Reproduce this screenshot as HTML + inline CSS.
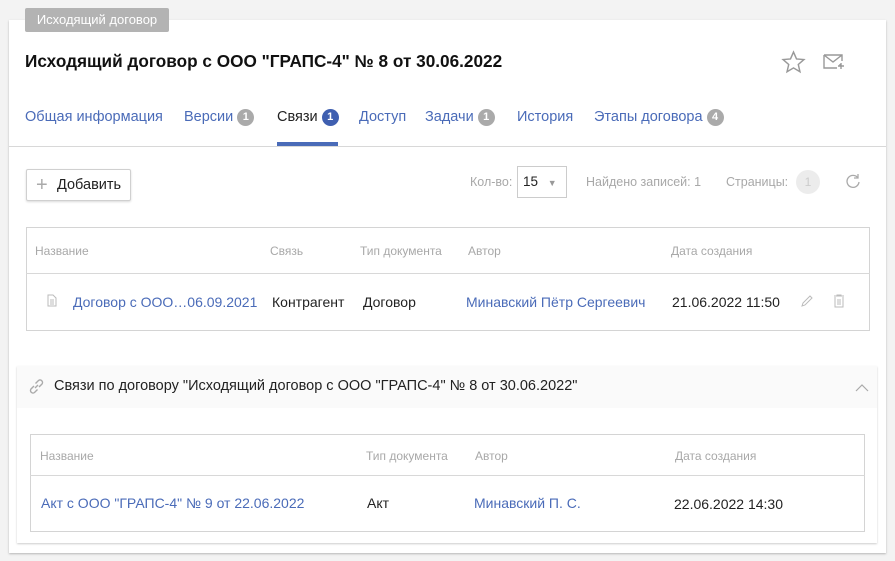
<!DOCTYPE html>
<html><head><meta charset="utf-8"><style>
*{box-sizing:border-box;margin:0;padding:0}
body{width:895px;height:561px;background:#f3f3f3;font-family:"Liberation Sans",sans-serif;position:relative;overflow:hidden;color:#222}
.a{position:absolute;white-space:nowrap}
.card{position:absolute;left:9px;top:20px;width:877px;height:533px;background:#fff;box-shadow:0 1px 2px rgba(0,0,0,.25)}
.tag{left:25px;top:8px;width:144px;height:24px;background:#b3b3b3;color:#fff;font-size:13px;line-height:24px;text-align:center;border-radius:2px}
.blue{color:#4a6bb8}
.badge{display:inline-block;width:17px;height:17px;border-radius:50%;background:#aaa;color:#fff;font-size:11px;line-height:17px;text-align:center;vertical-align:1px;margin-left:4px;font-weight:bold}
.g{color:#a8a8a8;font-size:12px}
.box{position:absolute;border:1px solid #d4d4d4;background:#fff}
</style></head><body>
<div class="card"></div>
<div class="a tag">Исходящий договор</div>
<div class="a" style="left:25px;top:51px;font-size:17.2px;font-weight:bold;color:#111">Исходящий договор с ООО "ГРАПС-4" № 8 от 30.06.2022</div>
<svg class="a" style="left:781px;top:50px" width="25" height="25" viewBox="0 0 24 24"><path d="M12 2l2.9 6.6 7.1.6-5.4 4.7 1.6 7-6.2-3.7-6.2 3.7 1.6-7L2 9.2l7.1-.6z" fill="none" stroke="#999" stroke-width="1.4"/></svg>
<svg class="a" style="left:822px;top:52px" width="24" height="20" viewBox="0 0 24 20"><path d="M18 14v-2M2 3h18v6M2 3v13h13M2 3l9 7 9-7M16 14h6M19 11v6" fill="none" stroke="#999" stroke-width="1.4"/></svg>
<div class="a" style="left:25px;top:108px;font-size:14.5px;line-height:18px"><span class="blue">Общая информация</span></div>
<div class="a" style="left:184px;top:108px;font-size:14.5px;line-height:18px"><span class="blue">Версии</span><span class="badge">1</span></div>
<div class="a" style="left:277px;top:108px;font-size:14.5px;line-height:18px">Связи<span class="badge" style="background:#3f5fb0">1</span></div>
<div class="a" style="left:277px;top:142px;width:61px;height:4px;background:#4a6bb8"></div>
<div class="a" style="left:359px;top:108px;font-size:14.5px;line-height:18px"><span class="blue">Доступ</span></div>
<div class="a" style="left:425px;top:108px;font-size:14.5px;line-height:18px"><span class="blue">Задачи</span><span class="badge">1</span></div>
<div class="a" style="left:517px;top:108px;font-size:14.5px;line-height:18px"><span class="blue">История</span></div>
<div class="a" style="left:594px;top:108px;font-size:14.5px;line-height:18px"><span class="blue">Этапы договора</span><span class="badge">4</span></div>
<div class="a" style="left:9px;top:146px;width:877px;height:1px;background:#d8d8d8"></div>
<div class="a" style="left:26px;top:169px;width:105px;height:32px;border:1px solid #d0d0d0;border-radius:2px;box-shadow:0 1px 2px rgba(0,0,0,.15);font-size:14.5px;line-height:30px;padding-left:30px">Добавить</div>
<div class="a" style="left:36px;top:177px;font-size:20px;line-height:16px;color:#aaa">+</div>
<div class="a g" style="left:470px;top:175px;font-size:12.5px">Кол-во:</div>
<div class="a" style="left:517px;top:166px;width:50px;height:32px;border:1px solid #ccc;font-size:13.5px;line-height:30px;padding-left:5px">15 <span style="color:#999;font-size:9px;margin-left:6px">▼</span></div>
<div class="a g" style="left:586px;top:175px;font-size:12.5px">Найдено записей: 1</div>
<div class="a g" style="left:726px;top:175px;font-size:12.5px">Страницы:</div>
<div class="a" style="left:796px;top:170px;width:24px;height:24px;border-radius:50%;background:#ececec;color:#ccc;font-size:12px;line-height:24px;text-align:center">1</div>
<svg class="a" style="left:845px;top:173px" width="16" height="16" viewBox="0 0 16 16"><path d="M13 5A6 6 0 1 0 14 9M13 1v4H9" fill="none" stroke="#aaa" stroke-width="1.3"/></svg>
<div class="box" style="left:26px;top:227px;width:844px;height:104px"></div>
<div class="a" style="left:26px;top:273px;width:844px;height:1px;background:#d8d8d8"></div>
<div class="a g" style="left:35px;top:244px">Название</div>
<div class="a g" style="left:270px;top:244px">Связь</div>
<div class="a g" style="left:360px;top:244px">Тип документа</div>
<div class="a g" style="left:468px;top:244px">Автор</div>
<div class="a g" style="left:671px;top:244px">Дата создания</div>
<svg class="a" style="left:47px;top:294px" width="10" height="13" viewBox="0 0 10 13"><path d="M1 1h5l3 3v8H1zM3 6h4M3 8h4M3 10h4" fill="none" stroke="#bbb"/></svg>
<div class="a blue" style="left:73px;top:294px;font-size:14px">Договор с ООО…06.09.2021</div>
<div class="a" style="left:272px;top:294px;font-size:14px">Контрагент</div>
<div class="a" style="left:363px;top:294px;font-size:14px">Договор</div>
<div class="a blue" style="left:466px;top:294px;font-size:14px">Минавский Пётр Сергеевич</div>
<div class="a" style="left:672px;top:294px;font-size:14px">21.06.2022 11:50</div>
<svg class="a" style="left:800px;top:294px" width="14" height="14" viewBox="0 0 14 14"><path d="M2 12l1-3 7-7 2 2-7 7z" fill="none" stroke="#bbb"/></svg>
<svg class="a" style="left:833px;top:294px" width="12" height="14" viewBox="0 0 12 14"><path d="M1 2h10M4 2V1h4v1M2 3v10h8V3M5 5v6M7 5v6" fill="none" stroke="#bbb"/></svg>
<div class="a" style="left:17px;top:366px;width:860px;height:177px;background:#fff;box-shadow:0 1px 2px rgba(0,0,0,.2)"></div>
<div class="a" style="left:17px;top:366px;width:860px;height:42px;background:#fafafa"></div>
<svg class="a" style="left:27px;top:377px" width="19" height="19" viewBox="0 0 19 19"><path d="M8 11l3-3M7 9l-3 3a2.5 2.5 0 0 0 3.5 3.5l3-3M12 10l3-3a2.5 2.5 0 0 0-3.5-3.5l-3 3" fill="none" stroke="#aaa" stroke-width="1.4"/></svg>
<div class="a" style="left:54px;top:378px;font-size:14.5px">Связи по договору "Исходящий договор с ООО "ГРАПС-4" № 8 от 30.06.2022"</div>
<svg class="a" style="left:855px;top:383px" width="14" height="9" viewBox="0 0 14 9"><path d="M1 8l6-6 6 6" fill="none" stroke="#aaa" stroke-width="1.2"/></svg>
<div class="box" style="left:30px;top:434px;width:835px;height:98px"></div>
<div class="a" style="left:30px;top:475px;width:835px;height:1px;background:#d8d8d8"></div>
<div class="a g" style="left:40px;top:449px">Название</div>
<div class="a g" style="left:366px;top:449px">Тип документа</div>
<div class="a g" style="left:475px;top:449px">Автор</div>
<div class="a g" style="left:675px;top:449px">Дата создания</div>
<div class="a blue" style="left:41px;top:495px;font-size:14px">Акт с ООО "ГРАПС-4" № 9 от 22.06.2022</div>
<div class="a" style="left:367px;top:495px;font-size:14px">Акт</div>
<div class="a blue" style="left:474px;top:495px;font-size:14px">Минавский П. С.</div>
<div class="a" style="left:674px;top:496px;font-size:14px">22.06.2022 14:30</div>
</body></html>
